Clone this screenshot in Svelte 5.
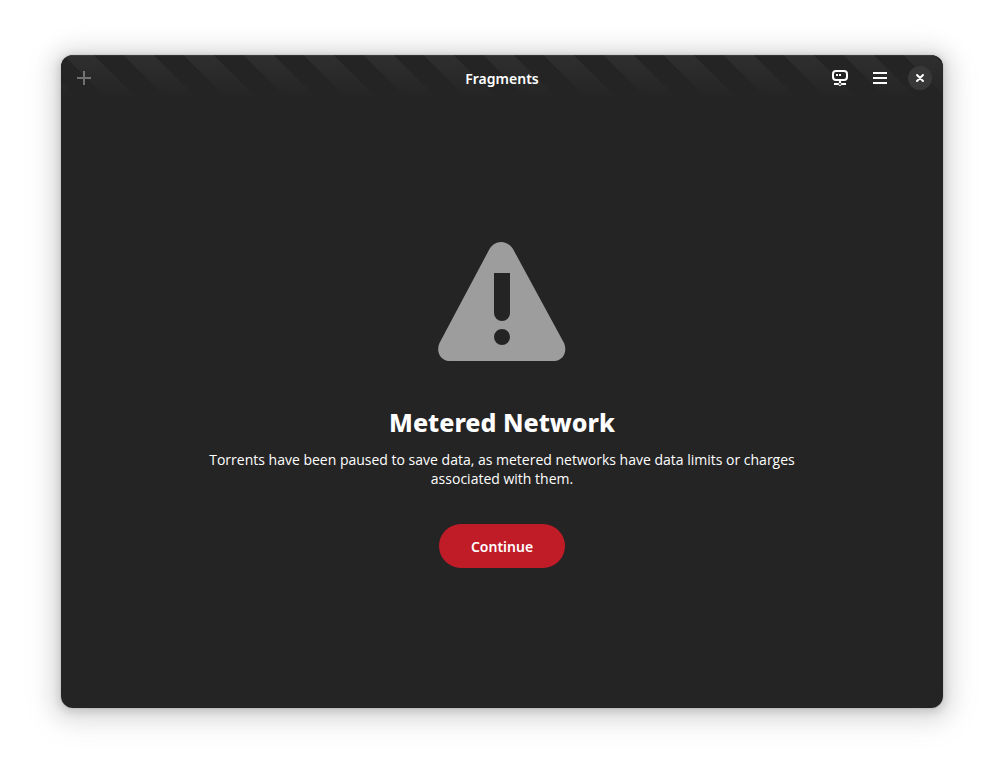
<script lang="ts">
    let title = "Fragments";
    let metered = {
        heading: "Metered Network",
        description:
            "Torrents have been paused to save data, as metered networks have data limits or charges associated with them.",
    };
</script>

<main class="window">
    <header>
        <div class="side">
            <button class="add" aria-label="Add torrent" disabled>
                <svg width="16" height="16" viewBox="0 0 16 16">
                    <path d="M7 1h2v6h6v2H9v6H7V9H1V7h6z" />
                </svg>
            </button>
        </div>
        <h1>{title}</h1>
        <div class="side end">
            <button aria-label="Connections">
                <svg width="16" height="16" viewBox="0 0 16 16">
                    <rect class="line" x="1" y="1" width="14" height="9" rx="3" />
                    <path d="M4 4h2v2H4zM7 4h2v2H7zM7 10h2v3H7zM2 13h4v2H2zM10 13h4v2h-4z" />
                    <circle class="thin" cx="8" cy="14" r="1.5" />
                </svg>
            </button>
            <button aria-label="Main menu">
                <svg width="16" height="16" viewBox="0 0 16 16">
                    <path d="M1 2h14v2H1zM1 7h14v2H1zM1 12h14v2H1z" />
                </svg>
            </button>
            <button class="close" aria-label="Close">
                <svg width="16" height="16" viewBox="0 0 16 16">
                    <path class="cross" d="M5 5l6 6M11 5l-6 6" />
                </svg>
            </button>
        </div>
    </header>

    <section>
        <svg class="warning" width="128" height="128" viewBox="0 0 128 128">
            <path
                fill-rule="evenodd"
                d="M63 5C58 5 54 8 51.500 12L1.500 106C-2.500 115 3 124 11 124H116.500C124.500 124 130 115 126 106L75 12C72.500 8 68 5 63 5ZM56 36H72V76A8 8 0 0 1 56 76ZM64 92A8 8 0 0 1 64 108A8 8 0 0 1 64 92Z"
            />
        </svg>
        <h2>{metered.heading}</h2>
        <p>{metered.description}</p>
        <button class="continue">Continue</button>
    </section>
</main>

<style>
    :global(body) {
        background: white;
    }

    .window {
        box-sizing: border-box;
        display: flex;
        flex-direction: column;
        min-height: calc(100vh - 122px);
        margin: 55px 61px 67px;
        border-radius: 12px;
        overflow: hidden;
        background: #242424;
        color: white;
        font: 14px/19px "Noto Sans", sans-serif;
        box-shadow:
            0 0 0 1px rgba(0, 0, 0, 0.05),
            0 2px 8px 2px rgba(0, 0, 0, 0.13),
            0 3px 20px 10px rgba(0, 0, 0, 0.09),
            0 6px 32px 16px rgba(0, 0, 0, 0.04);
    }

    header {
        display: flex;
        align-items: center;
        height: 46px;
        padding: 0 11px;
        /* 45 degree stripes that fade out towards the content */
        background:
            linear-gradient(transparent, #242424 44px),
            linear-gradient(
                    45deg,
                    #2f2f2f 25%,
                    #242424 25% 50%,
                    #2f2f2f 50% 75%,
                    #242424 75%
                )
                3px 0 / 60px 60px;
        box-shadow: inset 0 1px rgba(255, 255, 255, 0.07);
    }

    .side {
        display: flex;
        flex: 1;
        align-items: center;
        gap: 16px;
    }

    .end {
        justify-content: flex-end;
    }

    h1 {
        margin: 0;
        font-size: 14px;
        font-weight: 600;
    }

    button {
        border: 0;
        background: none;
        color: inherit;
        font: inherit;
    }

    header button {
        display: flex;
        align-items: center;
        justify-content: center;
        width: 24px;
        height: 24px;
        padding: 0;
        border-radius: 50%;
    }

    header .add {
        opacity: 0.35;
    }

    header .close {
        background: #383838;
    }

    svg {
        display: block;
        fill: currentColor;
    }

    .line,
    .thin,
    .cross {
        fill: none;
        stroke: currentColor;
        stroke-width: 2;
    }

    .thin {
        fill: #242424;
        stroke-width: 1;
    }

    .cross {
        stroke-linecap: round;
    }

    section {
        display: flex;
        flex: 1;
        flex-direction: column;
        align-items: center;
        justify-content: center;
        padding: 0 36px 4px;
        text-align: center;
    }

    .warning {
        color: #9d9d9d;
    }

    h2 {
        margin: 37px 0 8px;
        font-size: 25px;
        font-weight: 800;
        line-height: 40px;
    }

    p {
        max-width: 600px;
        margin: 0 0 36px;
        font-family: "Open Sans", sans-serif;
    }

    .continue {
        height: 44px;
        padding: 0 32px;
        border-radius: 22px;
        background: #c01c28;
        font-weight: 600;
    }
</style>
